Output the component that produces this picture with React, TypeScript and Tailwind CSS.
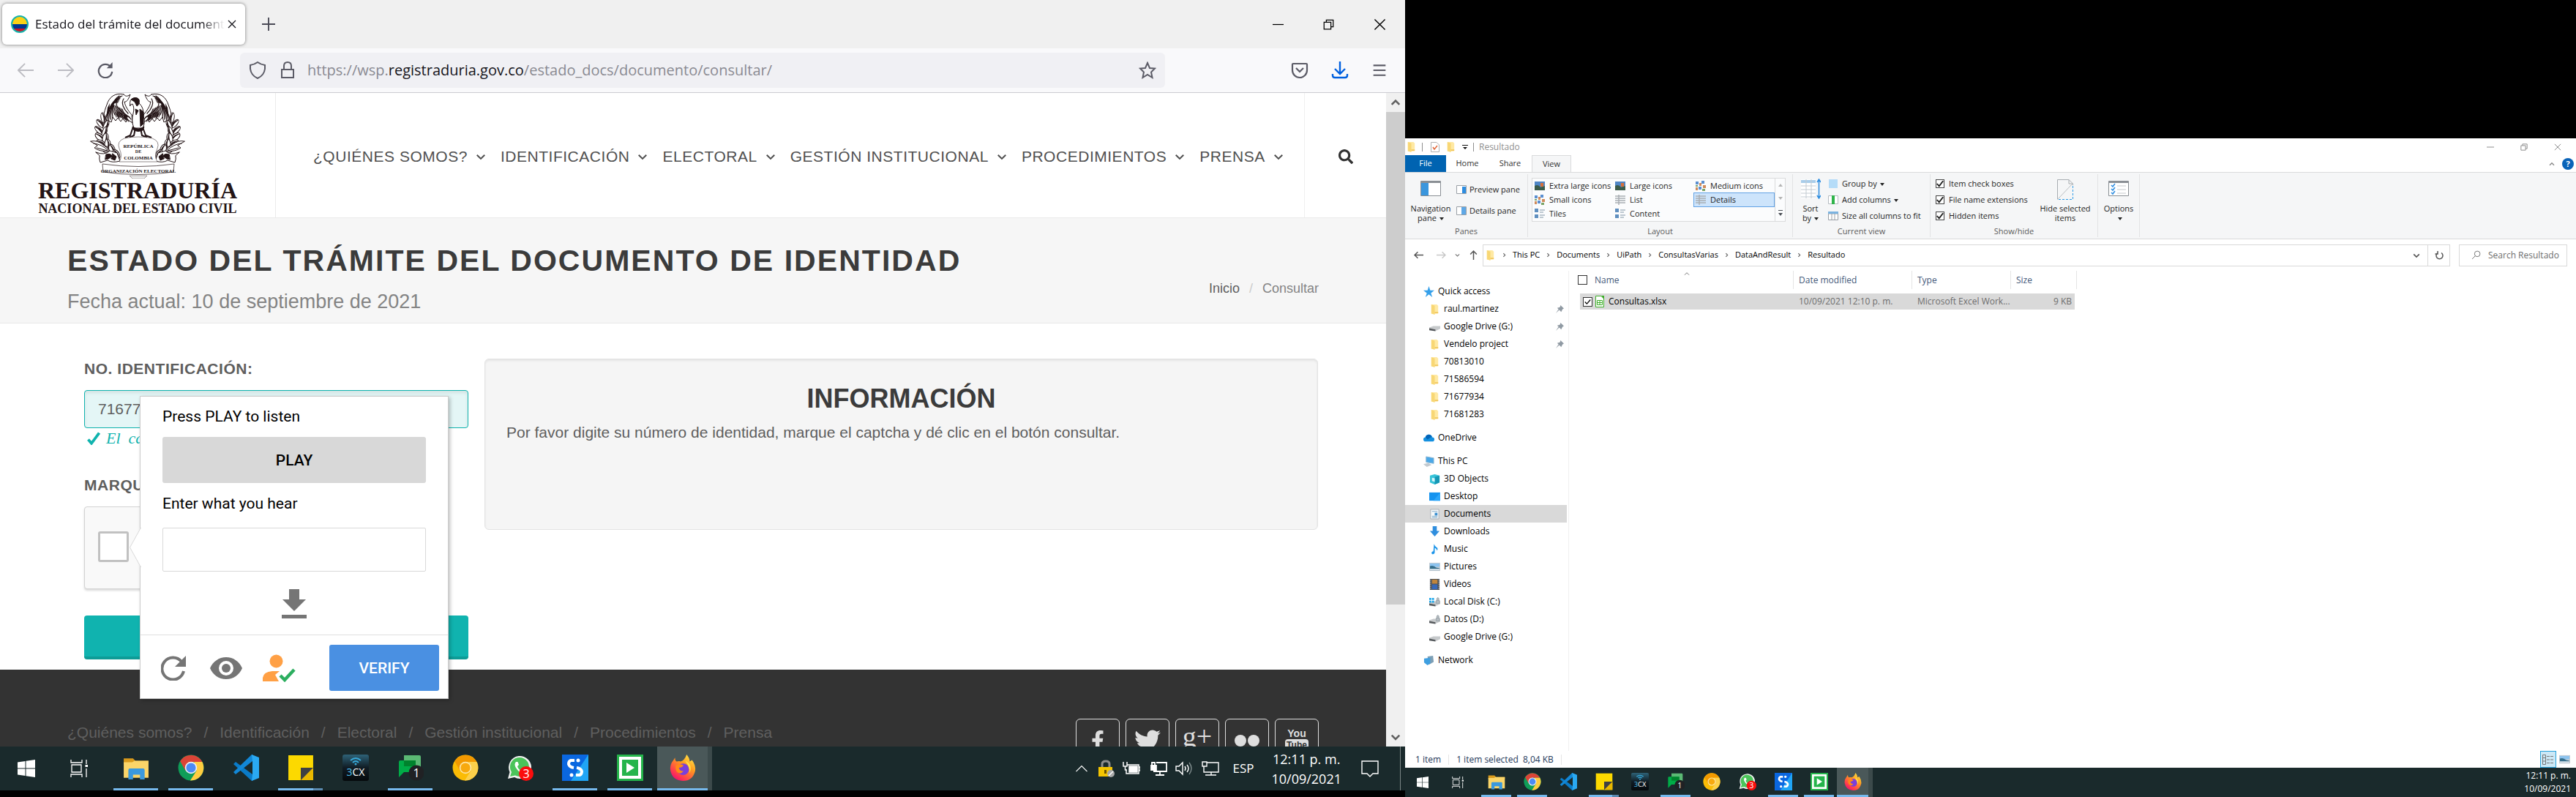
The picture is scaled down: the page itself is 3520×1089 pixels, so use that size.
import type { ReactNode } from "react";
import { FaFacebookF, FaTwitter } from "react-icons/fa";
import { FaSearch } from "react-icons/fa";

/* ------------------------------------------------------------------ */
/* Emblem                                                              */
/* ------------------------------------------------------------------ */

const INK = "#231416";

function EmblemHalf() {
  const longFeathers = [0, 1, 2, 3, 4];
  const shortFeathers = [0, 1, 2, 3, 4, 5, 6];
  const leaves: [number, number, number, number][] = [
    [18, 34, 3, -10],
    [14, 42, 3, -40],
    [22, 44, 3, 25],
    [12, 51, 3, -45],
    [20, 53, 3, 20],
    [13, 60, 4, -50],
    [21, 62, 4, 10],
    [15, 69, 4, -60],
    [24, 70, 4, 0],
    [21, 77, 4, -50],
    [30, 77, 4, -20],
    [28, 86, 4, -60],
    [36, 84, 4, -30],
  ];
  return (
    <g stroke={INK} strokeWidth="1" fill="#fff" strokeLinejoin="round" strokeLinecap="round">
      <path d="M46 2 C34 -1 26 6 23 16 C19 26 17 36 17 46 L21 42 L24 46 L26 38 L29 40 L31 33 L35 38 L38 34 L42 39 L45 35 L49 40 L51 36 L58 41 L57 30 C52 24 48 18 47 12 C50 13 53 8 55 2 C50 6 48 4 46 2Z" />
      {longFeathers.map((i) => (
        <path
          key={i}
          fill="none"
          strokeWidth="1.3"
          d={`M${42 - i} ${5 + i * 2} C${32 - i} ${8 + i} ${26 + i} ${18 + i} ${19 + i * 3} ${42 - i * 2}`}
        />
      ))}
      {shortFeathers.map((i) => (
        <path
          key={i}
          fill="none"
          strokeWidth="1.1"
          d={`M${32 + i * 2} ${16 + i} q2 8 ${4 + i} ${17 - i} M${36 + i * 2} ${24 + i} q3 5 ${5} 9`}
        />
      ))}
      <path fill="none" strokeWidth="1.2" d="M44 4 C36 6 34 14 38 20 C44 28 52 30 56 36 M40 4 C30 10 30 22 34 30 M46 8 C42 14 46 22 52 28" />
      <path fill={INK} stroke="none" d="M24 20 L27 14 L26 26 L22 34Z M35 26 L39 30 L41 36 L37 32Z M46 30 L50 33 L51 38 L46 34Z" />
      {leaves.map(([x, y, r, a]) => (
        <g key={`${x}-${y}`} transform={`translate(${x} ${y}) rotate(${a})`}>
          <ellipse rx={r} ry="7" />
          <path d="M0 -6 Q2 0 0 6 L1.8 3 Q3 -1 0 -6Z" fill={INK} />
        </g>
      ))}
      <path d="M1 66 Q10 64 18 71 Q24 74 27 80 Q12 80 6 75 L10 72Z" />
      <path d="M5 69 Q16 70 24 78 M9 75 Q16 77 24 79" fill="none" />
      <path d="M8 81 Q20 86 27 79 L37 82 L41 93 Q30 96 24 92 L14 95 Q12 90 13 86Z" />
      <path d="M22 84 Q28 82 30 86 Q26 91 21 91Z M31 83 L36 87 L34 92 L29 90Z" fill={INK} />
    </g>
  );
}

function Emblem() {
  return (
    <svg viewBox="0 0 130 117" className="h-[117px] w-[130px]" aria-hidden="true">
      <EmblemHalf />
      <g transform="translate(130 0) scale(-1 1)">
        <EmblemHalf />
      </g>
      <g stroke={INK} strokeWidth="1" strokeLinejoin="round">
        <path d="M55 18 Q53 8 60 7 Q68 5 67 14 Q74 20 73 32 Q76 40 72 48 L60 48 Q56 38 59 28 Q61 20 58 15 L54 17Z" fill="#fff" />
        <path d="M56 9 Q62 4 67 9 Q68 16 64 18 L61 12Z M68 22 L73 26 L73 42 L69 46Z M62 22 L66 24 L63 30Z" fill={INK} />
        <path d="M59 46 L55 58 L48 61 M62 48 L60 58 L54 61 M72 47 L76 58 L84 61 M69 48 L71 58 L78 61" fill="none" strokeWidth="2" />
        <path d="M58 46 Q66 52 74 46 L72 51 Q66 54 60 51Z" fill={INK} />
        <path d="M40 94 Q45 86 40 76 Q36 66 47 62 Q66 58 85 62 Q96 66 92 76 Q87 86 92 94Z" fill="#fff" strokeWidth="0.5" />
        <path d="M17 97 Q66 104 115 97 L114 108 Q66 115 18 108Z" fill="#fff" strokeWidth="0.7" />
        <path d="M54 113 L78 113 L74 117 L58 117Z" fill="#eee" strokeWidth="0.4" />
      </g>
      <g fill={INK} textAnchor="middle" fontFamily="Liberation Serif" fontSize="7">
        <text x="66" y="75">REPÚBLICA</text>
        <text x="66" y="82" fontSize="6">DE</text>
        <text x="66" y="91">COLOMBIA</text>
        <text x="66" y="109" fontSize="7" fontWeight="700">ORGANIZACIÓN ELECTORAL</text>
      </g>
    </svg>
  );
}

/* ------------------------------------------------------------------ */
/* Small line icons                                                    */
/* ------------------------------------------------------------------ */

function Line({
  d,
  box = 24,
  w = 2,
  className,
}: {
  d: string;
  box?: number;
  w?: number;
  className: string;
}) {
  return (
    <svg viewBox={`0 0 ${box} ${box}`} className={className} fill="none" stroke="currentColor" strokeWidth={w} aria-hidden="true">
      <path d={d} />
    </svg>
  );
}

const CHEVRON_DOWN = "M3 8 L12 17 L21 8";
const CHEVRON_UP = "M3 17 L12 8 L21 17";
const CHEVRON_RIGHT = "M8 4 L16 12 L8 20";
const CROSS = "M2 2 L22 22 M22 2 L2 22";
const RESTORE = "M2 7 H17 V22 H2Z M7 7 V2 H22 V17 H17";

/* ------------------------------------------------------------------ */
/* Taskbar                                                             */
/* ------------------------------------------------------------------ */

function WindowsIcon() {
  return (
    <svg viewBox="0 0 24 24" className="h-full" fill="#fff" aria-hidden="true">
      <path d="M0 3.4 L10.5 2 V11.5 H0Z M11.5 1.8 L24 0 V11.5 H11.5Z M0 12.5 H10.5 V22 L0 20.6Z M11.5 12.5 H24 V24 L11.5 22.2Z" />
    </svg>
  );
}

function TaskViewIcon() {
  return (
    <svg viewBox="0 0 24 24" className="h-full" fill="none" stroke="#fff" strokeWidth="1.3" aria-hidden="true">
      <path d="M1 0 V4 H16 V0 M2 7 H15 V17 H2Z M1 24 V20 H16 V24 M22 0 V6 M22 12 V24" />
      <path d="M20.500 7 H24 V10 H20.500Z" fill="#fff" stroke="none" />
    </svg>
  );
}

function ExplorerIcon() {
  return (
    <svg viewBox="0 0 34 34" className="h-full" aria-hidden="true">
      <path d="M1 5 H13 L16 8 H33 V12 H1Z" fill="#d99a1c" />
      <path d="M1 10 L12 10 L15 8 H33 V30 H1Z" fill="#fbd569" />
      <path d="M7 32 V20 Q7 18 9 18 H26 Q28 18 28 20 V32 H22 V26 H13 V32Z" fill="#3a99de" />
    </svg>
  );
}

function ChromeIcon({ gold = false }: { gold?: boolean }) {
  const top = gold ? "#f29900" : "#db4437";
  const left = gold ? "#fbbc05" : "#0f9d58";
  const right = gold ? "#fcd04b" : "#ffcd40";
  return (
    <svg viewBox="0 0 34 34" className="h-full" aria-hidden="true">
      <circle cx="17" cy="17" r="16.500" fill={left} />
      <path d="M3 8.500 A16.500 16.500 0 0 1 31.500 9.500 H17 L10 21Z" fill={top} />
      <path d="M31.500 9.500 A16.500 16.500 0 0 1 16 33.500 L24 21 L21 9.500Z" fill={right} />
      <circle cx="17" cy="17" r="7.800" fill={gold ? "#fde6a5" : "#f1f1f1"} />
      <circle cx="17" cy="17" r="6.200" fill={gold ? "#f7a90f" : "#4c8bf5"} />
    </svg>
  );
}

function CodeIcon() {
  return (
    <svg viewBox="0 0 36 36" className="h-full" aria-hidden="true">
      <path d="M1 13 L4 10 L27 27 V36 L26 36Z" fill="#0a7bc8" />
      <path d="M1 24 L4 27 L27 9 V0 L26 0Z" fill="#1287d6" />
      <path d="M26 0 L36 4 V32 L26 36 L27 27 V9Z" fill="#2aa9f2" />
    </svg>
  );
}

function StickyIcon() {
  return (
    <svg viewBox="0 0 34 34" className="h-full" aria-hidden="true">
      <path d="M1 1 H33 V33 H1Z" fill="#fcd900" />
      <path d="M16 33 L33 33 V17Z" fill="#e9b800" />
      <path d="M17 17 H33 L17 33Z" fill="#3e4043" />
    </svg>
  );
}

function ThreeCxIcon() {
  return (
    <svg viewBox="0 0 36 36" className="h-full" aria-hidden="true">
      <defs>
        <linearGradient id="cx" x1="0" y1="0" x2="0" y2="1">
          <stop offset="0" stopColor="#2e6277" />
          <stop offset="0.500" stopColor="#101c24" />
          <stop offset="1" stopColor="#05090c" />
        </linearGradient>
      </defs>
      <rect width="36" height="36" rx="3" fill="url(#cx)" />
      <path d="M11 8 Q18 2 25 8 M14 11 Q18 7 22 11" stroke="#37a8d8" strokeWidth="2" fill="none" />
      <circle cx="18" cy="13" r="1.500" fill="#37a8d8" />
      <text x="18" y="29" fontSize="14" fontFamily="Open Sans" textAnchor="middle" fill="#fff">
        <tspan fill="#4cc0f0">3</tspan>CX
      </text>
    </svg>
  );
}

function ChatIcon() {
  return (
    <svg viewBox="0 0 36 36" className="h-full" aria-hidden="true">
      <path d="M9 1 H30 Q32 1 32 3 V22 L26 16 H9Z" fill="#5bb974" />
      <path d="M2 10 Q2 8 4 8 H25 V24 H9 L2 31Z" fill="#00ac47" />
      <path d="M9 8 H25 V16 H9Z" fill="#00832d" />
      <circle cx="26" cy="25" r="10.500" fill="#202124" />
      <text x="26" y="31" fontSize="16" fontFamily="Open Sans" textAnchor="middle" fill="#fff">1</text>
    </svg>
  );
}

function WhatsAppTaskIcon() {
  return (
    <svg viewBox="0 0 36 36" className="h-full" aria-hidden="true">
      <path d="M1 33 L3.500 24 A15.500 15.500 0 1 1 10 31Z" fill="#f2f2f2" />
      <path d="M4 30 L6 24 A13 13 0 1 1 11 28.500Z" fill="#4bc45a" />
      <path d="M12 10 Q9 13 12 18 Q16 25 22 26 Q25 25 25 22 L21 20 L19 22 Q15 20 14 16 L16 14 L14.500 10Z" fill="#fff" />
      <circle cx="26" cy="26" r="10" fill="#fb0d0d" />
      <text x="26" y="32" fontSize="16" fontFamily="Open Sans" textAnchor="middle" fill="#fff">3</text>
    </svg>
  );
}

function StudioIcon() {
  return (
    <svg viewBox="0 0 36 36" className="h-full" aria-hidden="true">
      <rect width="36" height="36" fill="#0a67e0" />
      <path d="M36 0 V36 H12Z" fill="#20a5f5" />
      <path d="M17 8 H12 Q9 9 9 13 Q10 17 16 18 M19 28 H24 Q27 27 27 23 Q26 19 20 18" stroke="#fff" strokeWidth="4" fill="none" />
      <circle cx="22" cy="8" r="2.500" fill="#fff" />
      <circle cx="13" cy="28" r="2.500" fill="#fff" />
    </svg>
  );
}

function RobotIcon() {
  return (
    <svg viewBox="0 0 36 36" className="h-full" aria-hidden="true">
      <rect width="36" height="36" fill="#25b44b" />
      <rect x="5" y="5" width="26" height="26" fill="none" stroke="#fff" strokeWidth="4" />
      <path d="M13 11 L24 18 L13 25Z" fill="#fff" />
    </svg>
  );
}

function FirefoxIcon() {
  return (
    <svg viewBox="0 0 34 34" className="h-full" aria-hidden="true">
      <defs>
        <linearGradient id="ff" x1="0.900" y1="0" x2="0.200" y2="1">
          <stop offset="0" stopColor="#fff44f" />
          <stop offset="0.400" stopColor="#ff9a1f" />
          <stop offset="0.800" stopColor="#ff3750" />
          <stop offset="1" stopColor="#eb0878" />
        </linearGradient>
      </defs>
      <path d="M22 0 Q26 5 26 9 L29 7 Q34 14 33 21 Q30 34 17 34 Q3 33 1 20 Q0 13 5 7 L7 4 Q7 8 9 9 Q13 8 14 9 Q19 8 22 0Z" fill="url(#ff)" />
      <circle cx="17.500" cy="19" r="7.500" fill="#7a3fdb" />
      <path d="M8 14 Q14 11 18 14 Q16 17 12 17 Q13 22 18 21 Q14 27 9 22 Q7 18 8 14Z" fill="#ff8a16" />
      <path d="M20 8 Q30 12 26 24 Q26 15 20 8Z" fill="#ffe14a" />
    </svg>
  );
}

type TaskState = "idle" | "open" | "stacked" | "active";
const TASKS: { label: string; icon: ReactNode; state: TaskState }[] = [
  { label: "File Explorer", icon: <ExplorerIcon />, state: "open" },
  { label: "Google Chrome", icon: <ChromeIcon />, state: "open" },
  { label: "Visual Studio Code", icon: <CodeIcon />, state: "idle" },
  { label: "Sticky Notes", icon: <StickyIcon />, state: "stacked" },
  { label: "3CX", icon: <ThreeCxIcon />, state: "idle" },
  { label: "Google Chat", icon: <ChatIcon />, state: "open" },
  { label: "Chrome Canary", icon: <ChromeIcon gold />, state: "idle" },
  { label: "WhatsApp", icon: <WhatsAppTaskIcon />, state: "idle" },
  { label: "UiPath Studio", icon: <StudioIcon />, state: "open" },
  { label: "UiPath Robot", icon: <RobotIcon />, state: "open" },
  { label: "Firefox", icon: <FirefoxIcon />, state: "active" },
];

function TaskButtons({ small = false }: { small?: boolean }) {
  const slot = small ? "w-[49px]" : "w-[75px]";
  const glyph = small ? "h-6" : "h-9";
  const plain = small ? "w-12" : "w-[72px]";
  const plainGlyph = small ? "h-4" : "h-6";
  const bar = small ? "mx-1 h-[3px]" : "mx-[7px] h-[3px]";
  return (
    <div className="flex">
      <button aria-label="Start" className={`flex items-center justify-center ${plain}`}>
        <span className={plainGlyph}><WindowsIcon /></span>
      </button>
      <button aria-label="Task View" className={`mr-1 flex items-center justify-center ${plain}`}>
        <span className={plainGlyph}><TaskViewIcon /></span>
      </button>
      {TASKS.map((t) => (
        <button
          key={t.label}
          aria-label={t.label}
          className={`flex flex-col ${slot} ${t.state === "active" ? "border-r-[6px] border-[#3c4a4b] bg-[#4a5859]" : ""}`}
        >
          <span className="flex w-full flex-1 items-center justify-center">
            <span className={glyph}>{t.icon}</span>
          </span>
          <span className={t.state === "active" ? "flex h-[3px] w-full bg-[#76b9ed]" : `flex self-stretch ${bar} ${t.state === "idle" ? "" : "bg-[#76b9ed]"}`}>
            {t.state === "stacked" && <span className="ml-auto h-full w-[22%] bg-[#5b8ab0]" />}
          </span>
        </button>
      ))}
    </div>
  );
}

function Tray() {
  return (
    <div className="flex items-center font-['Open_Sans'] text-white">
      <Line d={CHEVRON_UP} className="mr-3 h-5 w-5" w={1.5} />
      <svg viewBox="0 0 24 24" className="mr-2.5 h-6 w-6" aria-hidden="true">
        <path d="M6 11 V6 Q6 2 11 2 Q16 2 16 6 V11" fill="none" stroke="#8d8d8d" strokeWidth="3" />
        <path d="M1 10 H20 V23 H1Z" fill="#f4c400" />
        <path d="M9 14 H12 V19 H9Z" fill="#6b5200" />
        <circle cx="18" cy="19" r="5" fill="#a9a9a9" />
        <path d="M15 22 L21 16" stroke="#fff" strokeWidth="1.500" />
      </svg>
      <svg viewBox="0 0 24 24" className="mr-3.5 h-6 w-6" fill="none" stroke="#fff" strokeWidth="1.500" aria-hidden="true">
        <path d="M6 7 H22 V19 H5 V14 M22 10 H24 V15 H22 M1 3 V9 H6 V3 M3.500 9 V14 H6" />
        <path d="M9 9 H20 V17 H9Z" fill="#fff" />
      </svg>
      <svg viewBox="0 0 24 24" className="mr-2.5 h-6 w-6" fill="none" stroke="#fff" strokeWidth="1.800" aria-hidden="true">
        <path d="M8 4 H22 V16 H4 M13 16 V21 M7 21 H19" />
        <path d="M1 8 H8 V14 H1Z" fill="#fff" />
        <path d="M2 8 V4 H6 V8" />
      </svg>
      <svg viewBox="0 0 24 24" className="mr-3 h-6 w-6" fill="none" stroke="#fff" strokeWidth="1.400" aria-hidden="true">
        <path d="M1 9 H5 L10 4 V20 L5 15 H1Z M13 9 Q15 12 13 15 M16 7 Q20 12 16 17" />
        <path d="M19 4 Q25 12 19 20" stroke="#7e8b8c" />
      </svg>
      <svg viewBox="0 0 24 24" className="mr-[18px] h-6 w-6" fill="none" stroke="#fff" strokeWidth="1.400" aria-hidden="true">
        <path d="M7 4 H23 V17 H3 V9 M13 17 V21 M5 21 H20 M1 3 H7 V9 H1Z" />
      </svg>
      <span className="mr-6 text-[17px]">ESP</span>
      <div className="mr-[27px] pt-0.5 text-center text-lg leading-[27px]">
        <div>12:11 p. m.</div>
        <div>10/09/2021</div>
      </div>
      <Line d="M1 2 H23 V19 H16 L12 23 L8 19 H1Z" className="mr-[29px] h-6 w-6" w={1.4} />
      <span className="mr-1.5 h-[60px] w-px bg-[#7b8686]" />
    </div>
  );
}

/* ------------------------------------------------------------------ */
/* Browser                                                             */
/* ------------------------------------------------------------------ */

function TabStrip() {
  return (
    <div className="flex h-[66px] items-center bg-[#f0f0f0] font-['Open_Sans'] text-[#15141a]">
      <div className="ml-[3px] flex h-14 w-[332px] items-center rounded-md bg-white px-3 shadow-[0_0_4px_rgba(0,0,0,0.5)]">
        <svg viewBox="0 0 24 24" className="h-6 w-6 shrink-0" aria-hidden="true">
          <clipPath id="flag"><circle cx="12" cy="12" r="11" /></clipPath>
          <g clipPath="url(#flag)">
            <path d="M0 0 H24 V12 H0Z" fill="#fcd116" />
            <path d="M0 12 H24 V18 H0Z" fill="#003893" />
            <path d="M0 18 H24 V24 H0Z" fill="#ce1126" />
          </g>
          <circle cx="12" cy="12" r="11" fill="none" stroke="#16b3ac" strokeWidth="2" />
        </svg>
        <span className="ml-[9px] flex-1 overflow-hidden text-[17px] whitespace-nowrap [mask-image:linear-gradient(to_right,black_88%,transparent)]">
          Estado del trámite del documento
        </span>
        <button aria-label="Close tab" className="ml-1"><Line d={CROSS} className="h-3 w-3" w={2.5} /></button>
      </div>
      <button aria-label="New tab" className="ml-[23px] text-[#4a4a55]">
        <Line d="M12 0 V24 M0 12 H24" className="h-[18px] w-[18px]" w={2.5} />
      </button>
      <div className="ml-auto flex items-center gap-[54px] pr-[26px] text-black">
        <button aria-label="Minimize"><Line d="M0 12 H24" className="h-[15px] w-[15px]" /></button>
        <button aria-label="Restore"><Line d={RESTORE} className="h-[15px] w-[15px]" /></button>
        <button aria-label="Close"><Line d={CROSS} className="h-[17px] w-[17px]" /></button>
      </div>
    </div>
  );
}

function Toolbar() {
  return (
    <div className="flex h-[61px] items-center border-b border-[#ccccd1] bg-[#f9f9fb] text-[#5b5b66]">
      <button aria-label="Back" className="ml-6 text-[#bcbcc2]">
        <Line d="M24 12 H1 M11 2 L1 12 L11 22" className="h-[22px] w-[22px]" />
      </button>
      <button aria-label="Forward" className="ml-[33px] text-[#bcbcc2]">
        <Line d="M0 12 H23 M13 2 L23 12 L13 22" className="h-[22px] w-[22px]" />
      </button>
      <button aria-label="Reload" className="ml-8">
        <svg viewBox="0 0 24 24" className="h-[22px] w-[22px]" fill="none" stroke="currentColor" strokeWidth="2.500" aria-hidden="true">
          <path d="M20 7 A10 10 0 1 0 22 14" />
          <path d="M22.500 0 V9 H14Z" fill="currentColor" stroke="none" />
        </svg>
      </button>
      <div className="mr-[172px] ml-[173px] flex h-12 flex-1 items-center rounded-md bg-[#f0f0f4] px-3">
        <Line d="M12 1 Q16 4 22 5 V10 Q21 19 12 23 Q3 19 2 10 V5 Q8 4 12 1Z" className="h-6 w-6" />
        <Line d="M4 11 H20 V22 H4Z M7 11 V6 Q7 1 12 1 Q17 1 17 6 V11" className="ml-[17px] h-6 w-6" />
        <p className="ml-[15px] flex-1 font-['Open_Sans'] text-xl text-[#8a8a92]">
          https://wsp.<span className="text-[#15141a]">registraduria.gov.co</span>/estado_docs/documento/consultar/
        </p>
        <button aria-label="Bookmark">
          <Line d="M12 2 L15 9 L22 9.500 L17 14.500 L18.500 22 L12 18 L5.500 22 L7 14.500 L2 9.500 L9 9Z" className="h-6 w-6" />
        </button>
      </div>
      <div className="flex items-center gap-[31px] pr-6">
        <button aria-label="Pocket"><Line d="M2 4 Q2 3 3 3 H21 Q22 3 22 4 V12 A10 10 0 0 1 2 12Z M7 9 L12 14 L17 9" className="h-6 w-6" w={2.2} /></button>
        <button aria-label="Downloads" className="text-[#0060df]"><Line d="M12 0 V16 M5 10 L12 17 L19 10 M2 17 V19 Q2 22 5 22 H19 Q22 22 22 19 V17" className="h-6 w-6" w={2.4} /></button>
        <button aria-label="Menu"><Line d="M2 4 H22 M2 12 H22 M2 20 H22" className="h-[20px] w-[22px]" w={2.5} /></button>
      </div>
    </div>
  );
}

const NAV = ["¿QUIÉNES SOMOS?", "IDENTIFICACIÓN", "ELECTORAL", "GESTIÓN INSTITUCIONAL", "PROCEDIMIENTOS", "PRENSA"];
const FOOTER = ["¿Quiénes somos?", "Identificación", "Electoral", "Gestión institucional", "Procedimientos", "Prensa"];

function SiteHeader() {
  return (
    <header className="flex h-[171px] border-b border-[#ebebeb] bg-white">
      <div className="flex w-[377px] shrink-0 flex-col items-center border-r border-[#ebebeb] font-['Liberation_Serif'] font-bold text-[#231416]">
        <Emblem />
        <div className="text-[32px] leading-8">REGISTRADURÍA</div>
        <div className="text-lg leading-[18px]">NACIONAL DEL ESTADO CIVIL</div>
      </div>
      <nav className="flex flex-1 items-center gap-5 border-r border-[#f0f0f0] pt-1 pl-[51px]">
        {NAV.map((n) => (
          <a key={n} href="#" className="flex items-center gap-[11px] text-[21px] tracking-wide whitespace-nowrap text-[#505050]">
            {n}
            <Line d={CHEVRON_DOWN} className="h-3.5 w-3.5" w={3.5} />
          </a>
        ))}
      </nav>
      <div className="flex w-[111px] items-center justify-center pt-1">
        <button aria-label="Buscar" className="text-[#303030]"><FaSearch className="h-5 w-5" /></button>
      </div>
    </header>
  );
}

function CaptchaPopup() {
  return (
    <div className="absolute top-[-152px] left-[75px] z-10 w-[422px] border border-[#cccccc] bg-white font-[Roboto] text-[21px] leading-6 text-black shadow-[2px_2px_5px_rgba(0,0,0,0.25)]">
      <svg viewBox="0 0 16 56" className="absolute top-[178px] -left-[15px] h-14 w-4" aria-hidden="true">
        <path d="M16 0 L0 28 L16 56Z" fill="#fff" />
        <path d="M15.500 1 L0.500 28 L15.500 55" fill="none" stroke="#d8d8d8" />
      </svg>
      <div className="flex flex-col px-[30px] pt-[15px]">
        <p>Press PLAY to listen</p>
        <button className="mt-4 h-[63px] rounded-[3px] bg-[#d8d8d8] font-medium">PLAY</button>
        <label htmlFor="heard" className="mt-4">Enter what you hear</label>
        <input id="heard" className="mt-[21px] h-[60px] rounded-[2px] border border-[#d9d9d9] px-3 outline-none" />
        <button aria-label="Download audio" className="mt-6 self-center text-[#757575]">
          <svg viewBox="0 0 34 40" className="h-10 w-[34px]" fill="currentColor" aria-hidden="true">
            <path d="M10 0 H24 V14 H33 L17 30 L1 14 H10Z M0 35 H34 V40 H0Z" />
          </svg>
        </button>
      </div>
      <div className="mt-[22px] flex items-center border-t border-[#dfdfdf] px-3 pt-[13px] pb-[10px] text-[#757575]">
        <button aria-label="New challenge" className="ml-4">
          <svg viewBox="0 0 34 34" className="h-[34px] w-[34px]" fill="none" stroke="currentColor" strokeWidth="4" aria-hidden="true">
            <path d="M28 8 A15 15 0 1 0 31 21" />
            <path d="M34 0 V15 H19Z" fill="currentColor" stroke="none" />
          </svg>
        </button>
        <button aria-label="Visual challenge" className="ml-[33px]">
          <svg viewBox="0 0 44 30" className="h-[30px] w-11" fill="currentColor" aria-hidden="true">
            <path fillRule="evenodd" d="M22 0 C12 0 4 6 0 15 C4 24 12 30 22 30 C32 30 40 24 44 15 C40 6 32 0 22 0Z M22 25 A10 10 0 1 1 22 5 A10 10 0 0 1 22 25Z" />
            <circle cx="22" cy="15" r="6" />
          </svg>
        </button>
        <button aria-label="Solve" className="ml-7">
          <svg viewBox="0 0 45 38" className="h-[38px] w-[45px]" aria-hidden="true">
            <circle cx="18.500" cy="9.500" r="9" fill="#ffa045" />
            <path d="M0 37 V32 Q1 24 13 23 H23 L17 28 L22 37Z" fill="#ffa045" />
            <path d="M24 29 L30 35 L43 21" fill="none" stroke="#2cae5f" strokeWidth="4.500" />
          </svg>
        </button>
        <button className="ml-auto h-[63px] w-[150px] rounded-[3px] bg-[#4a90e2] font-medium text-white">VERIFY</button>
      </div>
    </div>
  );
}

function SocialBox({ label, children }: { label: string; children: ReactNode }) {
  return (
    <a href="#" aria-label={label} className="flex h-[60px] w-[60px] items-center justify-center rounded-md border border-[#dedede] text-[#dedede]">
      {children}
    </a>
  );
}

function SitePage() {
  return (
    <div className="flex-1 overflow-hidden bg-white font-['Liberation_Sans'] text-[#5e5e5e]">
      <SiteHeader />
      <section className="flex items-end justify-between border-b border-[#e8e8e8] bg-[#f6f6f6] px-[92px] pt-[34px] pb-[13px]">
        <div>
          <h1 className="text-[41px] leading-[48px] font-bold tracking-wider text-[#3b3b3b]">
            ESTADO DEL TRÁMITE DEL DOCUMENTO DE IDENTIDAD
          </h1>
          <p className="mt-4 text-[27px] leading-8 text-[#848484]">Fecha actual: 10 de septiembre de 2021</p>
        </div>
        <nav className="flex gap-[13px] pb-[22px] text-lg leading-6">
          <a href="#">Inicio</a>
          <span className="text-[#cccccc]">/</span>
          <span className="text-[#848484]">Consultar</span>
        </nav>
      </section>

      <main className="flex gap-[22px] pt-12 pr-[93px] pb-[14px] pl-[115px]">
        <form className="flex w-[525px] shrink-0 flex-col text-[21px] leading-7" onSubmit={(e) => e.preventDefault()}>
          <label htmlFor="doc" className="font-bold tracking-wide">NO. IDENTIFICACIÓN:</label>
          <input
            id="doc"
            defaultValue="71677"
            className="mt-[15px] h-[52px] rounded-[4px] border border-[#0fb3ae] bg-[#e4f6f6] px-[18px] shadow-[inset_0_3px_4px_rgba(0,0,0,0.08)] outline-none"
          />
          <p className="flex items-center gap-2 pl-1 font-['Liberation_Serif'] text-[22px] text-[#0fb3ae] italic">
            <Line d="M2 14 L8 21 L22 2" className="h-[18px] w-[18px]" w={5} />
            El&nbsp; campo es válido
          </p>
          <label htmlFor="robot" className="mt-9 font-bold tracking-wide">MARQUE EL CAPTCHA:</label>
          <div className="relative mt-[15px] flex h-[113px] w-[480px] items-center rounded-[4px] border border-[#d3d3d3] bg-[#f9f9f9] pl-[18px] shadow-[0_2px_3px_rgba(0,0,0,0.15)]">
            <input id="robot" type="checkbox" className="mb-1 h-[42px] w-[42px] appearance-none rounded-[3px] border-[3px] border-[#c1c1c1] bg-white" />
            <CaptchaPopup />
          </div>
          <button aria-label="Consultar" className="mt-9 h-[60px] rounded-[4px] border-b-4 border-[#0e9c97] bg-[#10b3af]" />
        </form>
        <section className="min-h-[234px] flex-1 self-start rounded-md border border-[#e3e3e3] bg-[#f5f5f5] px-[29px] pt-[30px] shadow-[inset_0_2px_3px_rgba(0,0,0,0.07)]">
          <h2 className="text-center text-[36px] leading-[48px] font-bold text-[#3b3b3b]">INFORMACIÓN</h2>
          <p className="mt-2 text-[21px] leading-7">
            Por favor digite su número de identidad, marque el captcha y dé clic en el botón consultar.
          </p>
        </section>
      </main>

      <footer className="flex h-52 items-start justify-between bg-[#333333] pt-[67px] pr-[92px] pl-[92px]">
        <nav className="flex gap-4 pt-[5px] text-[21px] leading-7 text-[#5f5f5f]">
          {FOOTER.map((f, i) => (
            <span key={f} className="flex gap-4">
              {i > 0 && <span>/</span>}
              <a href="#">{f}</a>
            </span>
          ))}
        </nav>
        <div className="flex gap-2">
          <SocialBox label="Facebook"><FaFacebookF className="h-7 w-7" /></SocialBox>
          <SocialBox label="Twitter"><FaTwitter className="h-9 w-9" /></SocialBox>
          <SocialBox label="Google+"><span className="pb-3 font-['Liberation_Serif'] text-[38px] leading-8">g+</span></SocialBox>
          <SocialBox label="Flickr">
            <svg viewBox="0 0 34 16" className="h-4 w-[34px]" fill="currentColor" aria-hidden="true">
              <circle cx="8" cy="8" r="8" /><circle cx="26" cy="8" r="8" />
            </svg>
          </SocialBox>
          <SocialBox label="YouTube">
            <span className="flex flex-col items-center pb-1 text-sm leading-4 font-bold">
              You
              <span className="rounded bg-[#dedede] px-0.5 text-xs leading-4 text-[#333333]">Tube</span>
            </span>
          </SocialBox>
        </div>
      </footer>
    </div>
  );
}

function Scrollbar() {
  return (
    <div className="flex w-[26px] flex-col items-center bg-[#f0f0f0] text-[#606060]">
      <div className="flex h-[26px] items-center"><Line d={CHEVRON_UP} className="h-[14px] w-[14px]" w={4.5} /></div>
      <div className="w-full flex-1"><div className="h-[80%] bg-[#cdcdcd]" /></div>
      <div className="flex h-[26px] items-center"><Line d={CHEVRON_DOWN} className="h-[14px] w-[14px]" w={4.5} /></div>
    </div>
  );
}

/* ------------------------------------------------------------------ */
/* File explorer                                                       */
/* ------------------------------------------------------------------ */

function Folder() {
  return (
    <svg viewBox="0 0 16 16" className="h-[15px] w-[15px] shrink-0" aria-hidden="true">
      <path d="M3 1 H11 L13 3 V14 L3 15Z" fill="#ffe9a3" />
      <path d="M3 1 L8 3 V16 L3 14Z" fill="#f8d775" />
      <path d="M8 12 H13 V14 H8Z" fill="#f1c75b" />
    </svg>
  );
}

function Drive({ kind = "plain" }: { kind?: "plain" | "system" | "data" }) {
  return (
    <svg viewBox="0 0 16 16" className="h-[15px] w-[15px] shrink-0" aria-hidden="true">
      <path d="M0 9 L6 7 H16 V11 L9 14 L0 12Z" fill="#c6c9cb" />
      <path d="M0 10 L9 12 V14.500 L0 13Z" fill="#55595c" />
      {kind !== "plain" && <path d="M10 6 H15 V10 H10Z M11 6 V3 Q12.500 0 14 3 V6" fill="#b6bdc2" stroke="#9aa3a9" />}
      {kind === "system" && <path d="M0 2 H3 V5 H0Z M4 2 H7 V5 H4Z M0 6 H3 V9 H0Z M4 6 H7 V9 H4Z" fill="#21a8ea" />}
    </svg>
  );
}

function Glyph({ children }: { children: ReactNode }) {
  return <svg viewBox="0 0 16 16" className="h-[15px] w-[15px] shrink-0" aria-hidden="true">{children}</svg>;
}

function Picture() {
  return (
    <Glyph>
      <path d="M0 2 H16 V14 H0Z" fill="#c9ced3" />
      <path d="M1 3 H15 V8 H1Z" fill="#8cc3ef" />
      <path d="M1 7 Q6 5 10 9 L15 10 V13 H1Z" fill="#356e8b" />
      <path d="M1 11 H15 V13 H1Z" fill="#e6eef4" />
    </Glyph>
  );
}

type Place = { name: string; icon: ReactNode; root?: boolean; pinned?: boolean; selected?: boolean };
const PLACES: Place[] = [
  { name: "Quick access", root: true, icon: <Glyph><path d="M8 0 L10 6 L16 6 L11 10 L13 16 L8 12 L3 16 L5 10 L0 6 L6 6Z" fill="#35a0ea" /></Glyph> },
  { name: "raul.martinez", icon: <Folder />, pinned: true },
  { name: "Google Drive (G:)", icon: <Drive />, pinned: true },
  { name: "Vendelo project", icon: <Folder />, pinned: true },
  { name: "70813010", icon: <Folder /> },
  { name: "71586594", icon: <Folder /> },
  { name: "71677934", icon: <Folder /> },
  { name: "71681283", icon: <Folder /> },
  { name: "OneDrive", root: true, icon: <Glyph><path d="M3 13 Q0 13 0 10 Q0 7 3 7 Q4 3 8 3 Q12 3 13 7 Q16 7 16 10 Q16 13 13 13Z" fill="#1490df" /><path d="M3 7 Q4 3 8 3 Q11 3 12 6 L6 10Z" fill="#0364b8" /></Glyph> },
  { name: "This PC", root: true, icon: <Glyph><path d="M4 1 L15 3 V11 L4 9Z" fill="#4aa8e8" stroke="#8bb5d1" /><path d="M0 12 L7 10 L12 13 L5 16Z" fill="#c3cad0" /></Glyph> },
  { name: "3D Objects", icon: <Glyph><path d="M1 3 L8 1 L15 3 V13 L8 16 L1 13Z" fill="#36c3d8" /><path d="M8 5 L15 3 V13 L8 16Z" fill="#1497b5" /><path d="M4 6 L8 7 V12 L4 11Z" fill="#d5f5fa" /></Glyph> },
  { name: "Desktop", icon: <Glyph><path d="M0 2 H16 V14 H0Z" fill="#1593ef" /><path d="M16 2 V14 H6Z" fill="#2ba6fa" /></Glyph> },
  { name: "Documents", selected: true, icon: <Glyph><path d="M2 1 H14 V15 H2Z" fill="#f7f9fa" stroke="#a6adb3" /><path d="M4 4 H12 M4 11 H12 M4 13 H12" stroke="#7aa7c8" /><path d="M8 6 H12 V10 H8Z" fill="#3b8fd0" /></Glyph> },
  { name: "Downloads", icon: <Glyph><path d="M5 0 H11 V7 H15 L8 15 L1 7 H5Z" fill="#2f8ede" /></Glyph> },
  { name: "Music", icon: <Glyph><path d="M7 0 Q8 4 12 6 Q13 8 11 10 Q11 7 8 6 V13 Q7 16 4 15 Q2 12 6 11Z" fill="#1c95ea" /></Glyph> },
  { name: "Pictures", icon: <Picture /> },
  { name: "Videos", icon: <Glyph><path d="M1 0 H15 V16 H1Z" fill="#4a4f55" /><path d="M4 1 H12 V7 H4Z" fill="#c0853c" /><path d="M4 8 H12 V15 H4Z" fill="#3768b8" /><path d="M2 1 V16 M14 1 V16" stroke="#c9cdd1" strokeDasharray="1.500 1.500" /></Glyph> },
  { name: "Local Disk (C:)", icon: <Drive kind="system" /> },
  { name: "Datos (D:)", icon: <Drive kind="data" /> },
  { name: "Google Drive (G:)", icon: <Drive /> },
  { name: "Network", root: true, icon: <Glyph><path d="M6 2 L14 1 L15 10 L8 14Z" fill="#7d9fb5" /><path d="M1 5 L10 4 V12 L6 15 L1 11Z" fill="#3f9fe0" /></Glyph> },
];

function PlacesList() {
  return (
    <ul className="w-[224px] shrink-0 border-r border-[#f0f0f0] pt-4 pr-0.5">
      {PLACES.map((p, i) => (
        <li key={i} className={p.root && i > 0 ? "pt-2" : ""}>
          <a
            href="#"
            className={`flex h-6 items-center gap-[5px] pr-1 ${p.root ? "pl-[25px]" : "pl-[33px]"} ${p.selected ? "bg-[#d9d9d9]" : ""}`}
          >
            {p.icon}
            <span>{p.name}</span>
            {p.pinned && (
              <svg viewBox="0 0 12 12" className="ml-auto h-[11px] w-[11px]" aria-hidden="true">
                <path d="M7 0 L12 5 L10 6 L8 10 L5 7 L0 12 L4 6 L2 4 L6 3Z" fill="#909aa3" />
              </svg>
            )}
          </a>
        </li>
      ))}
    </ul>
  );
}

function PaneGlyph({ side }: { side: "left" | "right" }) {
  return (
    <svg viewBox="0 0 14 12" className="h-3 w-3.5" aria-hidden="true">
      <path d="M0.500 0.500 H13.500 V11.500 H0.500Z" fill="#fff" stroke="#9aa0a6" />
      {side === "left" ? <path d="M8 2 H13 V11 H8Z" fill="#2e8de0" /> : <path d="M7 1 H13 V11 H7Z" fill="#5fa8e6" />}
    </svg>
  );
}

function ListGlyph({ kind }: { kind: "photo" | "grid" | "rows" | "mixed" }) {
  return (
    <svg viewBox="0 0 14 14" className="h-3.5 w-3.5 shrink-0" aria-hidden="true">
      {kind === "photo" && (
        <>
          <path d="M0 1 H14 V13 H0Z" fill="#4f86c6" />
          <path d="M0 7 Q5 4 8 9 L14 7 V13 H0Z" fill="#3a5b4a" />
          <path d="M8 3 H12 V8 H8Z" fill="#d6703a" />
        </>
      )}
      {kind === "grid" && (
        <>
          <path d="M0 1 H4 V5 H0Z M8 0 H12 V4 H8Z M4 8 H8 V12 H4Z" fill="#5b8fd0" />
          <path d="M5 3 H8 V7 H5Z M10 6 H14 V10 H10Z M0 9 H3 V13 H0Z" fill="#d08b5b" />
          <path d="M9 11 H13 V14 H9Z M0 6 H3 V8 H0Z" fill="#7aa56a" />
        </>
      )}
      {kind === "rows" && <path d="M0 2 H14 M0 5 H14 M0 8 H14 M0 11 H14 M5 0 V14" stroke="#a9aeb4" strokeWidth="1.500" />}
      {kind === "mixed" && (
        <>
          <path d="M0 0 H5 V5 H0Z M0 8 H5 V13 H0Z" fill="#5f8fbf" />
          <path d="M7 2 H14 M7 5 H12 M7 9 H14 M7 12 H12" stroke="#a9b6c2" strokeWidth="1.500" />
        </>
      )}
    </svg>
  );
}

const LAYOUTS: [string, "photo" | "grid" | "rows" | "mixed"][] = [
  ["Extra large icons", "photo"],
  ["Large icons", "photo"],
  ["Medium icons", "grid"],
  ["Small icons", "grid"],
  ["List", "rows"],
  ["Details", "rows"],
  ["Tiles", "mixed"],
  ["Content", "mixed"],
];

function Caret() {
  return <svg viewBox="0 0 6 4" className="ml-1 inline-block h-1 w-1.5" fill="#222" aria-hidden="true"><path d="M0 0 H6 L3 4Z" /></svg>;
}

function Group({ label, className, children }: { label: string; className: string; children: ReactNode }) {
  return (
    <div className={`my-0.5 flex flex-col border-r border-[#e2e3e4] ${className}`}>
      <div className="flex h-[71px]">{children}</div>
      <div className="text-center leading-4 text-[#5a5a5a]">{label}</div>
    </div>
  );
}

function Ribbon() {
  return (
    <div className="flex h-[92px] border-y border-[#dadbdc] bg-[#f5f6f7] text-[11px] leading-3 text-[#1e1e1e]">
      <Group label="Panes" className="w-[168px]">
        <button className="flex w-[70px] flex-col items-center pt-[9px]">
          <svg viewBox="0 0 28 21" className="h-[21px] w-7" aria-hidden="true">
            <path d="M0.500 0.500 H27.500 V20.500 H0.500Z" fill="#fff" stroke="#8a8f94" />
            <path d="M1 1 H27 V3 H1Z" fill="#8a8f94" />
            <path d="M1 3 H11 V20 H1Z" fill="#3a96dd" />
          </svg>
          <span className="mt-2.5 leading-[13px]">Navigation<br />pane<Caret /></span>
        </button>
        <div className="flex flex-col gap-[17px] pt-[15px]">
          <button className="flex items-center gap-1"><PaneGlyph side="left" />Preview pane</button>
          <button className="flex items-center gap-1"><PaneGlyph side="right" />Details pane</button>
        </div>
      </Group>
      <Group label="Layout" className="w-[362px]">
        <div className="mt-[5px] ml-[5px] flex h-[60px] w-[347px] border border-[#dadbdc] bg-[#fbfcfd]">
          <div className="grid flex-1 grid-cols-[110px_110px_111px] grid-rows-3">
            {LAYOUTS.map(([name, kind]) => (
              <button
                key={name}
                className={`flex items-center gap-1.5 whitespace-nowrap ${name === "Details" ? "border border-[#62a2e4] bg-[#cde4fb] px-0.5" : "px-[3px]"}`}
              >
                <ListGlyph kind={kind} />
                {name}
              </button>
            ))}
          </div>
          <div className="flex w-[14px] flex-col items-center justify-around border-l border-[#dadbdc] text-[#a0a0a0]">
            <svg viewBox="0 0 6 4" className="h-1 w-1.5" fill="#b5b5b5" aria-hidden="true"><path d="M0 4 H6 L3 0Z" /></svg>
            <svg viewBox="0 0 6 4" className="h-1 w-1.5" fill="#b5b5b5" aria-hidden="true"><path d="M0 0 H6 L3 4Z" /></svg>
            <svg viewBox="0 0 6 8" className="h-2 w-1.5" fill="#4a4f55" aria-hidden="true"><path d="M0 0 H6 V1 H0Z M0 4 H6 L3 8Z" /></svg>
          </div>
        </div>
      </Group>
      <Group label="Current view" className="w-[188px]">
        <button className="flex w-[48px] flex-col items-center pt-1.5">
          <svg viewBox="0 0 28 28" className="h-7 w-7" aria-hidden="true">
            <path d="M1 1 H21 V27 H1Z" fill="#fff" />
            <path d="M1 2 H21 V6 H1Z" fill="#a9cdea" />
            <path d="M1 10 H21 M1 15 H21 M1 20 H21 M1 25 H21 M8 1 V27 M15 1 V27" stroke="#c3cbd2" />
            <path d="M25.500 2 V26 M23 5 L25.500 1 L28 5 M23 23 L25.500 27 L28 23" stroke="#2e8de0" strokeWidth="1.500" fill="none" />
          </svg>
          <span className="mt-1.5 leading-[13px]">Sort<br />by<Caret /></span>
        </button>
        <div className="flex flex-col items-start gap-2.5 pt-[7px] whitespace-nowrap">
          <button className="flex items-center gap-[5px]">
            <svg viewBox="0 0 14 12" className="h-3 w-3.5" aria-hidden="true"><path d="M1 0 H13 V12 H1Z" fill="#b5dcf8" /></svg>
            <span>Group by<Caret /></span>
          </button>
          <button className="flex items-center gap-[5px]">
            <svg viewBox="0 0 14 12" className="h-3 w-3.5" aria-hidden="true"><path d="M0.500 0.500 H13.500 V11.500 H0.500Z" fill="#fff" stroke="#b4bac0" /><path d="M5 0 H9 V12 H5Z" fill="#2fb34a" /></svg>
            <span>Add columns<Caret /></span>
          </button>
          <button className="flex items-center gap-[5px]">
            <svg viewBox="0 0 14 12" className="h-3 w-3.5" aria-hidden="true"><path d="M0.500 3 H13.500 V11.500 H0.500Z M5 3 V12 M9 3 V12" fill="#fff" stroke="#9aa0a6" /><path d="M0 0 H14 V3 H0Z" fill="#7bb3e0" /></svg>
            <span>Size all columns to fit</span>
          </button>
        </div>
      </Group>
      <Group label="Show/hide" className="w-[229px]">
        <div className="flex flex-col gap-2.5 pt-[7px] pl-[7px] whitespace-nowrap">
          {["Item check boxes", "File name extensions", "Hidden items"].map((t) => (
            <label key={t} className="flex items-center gap-1.5">
              <input type="checkbox" defaultChecked className="peer sr-only" />
              <span className="flex h-3 w-3 items-center justify-center border border-[#444] bg-white">
                <Line d="M2 12 L9 20 L22 3" className="h-2.5 w-2.5" w={4.5} />
              </span>
              {t}
            </label>
          ))}
        </div>
        <button className="ml-auto flex w-[88px] flex-col items-center pt-[7px]">
          <svg viewBox="0 0 22 28" className="h-7 w-[22px]" fill="none" aria-hidden="true">
            <path d="M0.500 27.500 V0.500 H16 L21.500 6 V8" stroke="#a8adb1" />
            <path d="M16 0.500 V6 H21.500" stroke="#a8adb1" />
            <path d="M1 27 L21 6" stroke="#b9bdc0" />
            <path d="M21.500 9 V27.500 H2" stroke="#2e9ce6" strokeDasharray="3 2" />
          </svg>
          <span className="mt-[5px] leading-[13px]">Hide selected<br />items</span>
        </button>
      </Group>
      <div className="my-0.5 flex w-[57px] flex-col border-r border-[#e2e3e4]">
        <button className="flex flex-col items-center pt-[9px]">
          <svg viewBox="0 0 28 21" className="h-[21px] w-7" aria-hidden="true">
            <path d="M0.500 0.500 H27.500 V20.500 H0.500Z" fill="#fff" stroke="#8a8f94" />
            <path d="M1 1 H27 V3 H1Z" fill="#8a8f94" />
            <path d="M4 6 L6 8 L9 4 M4 11 L6 13 L9 9 M4 16 L6 18 L9 14" stroke="#2e8de0" fill="none" strokeWidth="1.500" />
            <path d="M12 7 H24 M12 12 H24 M12 17 H24" stroke="#c4c8cb" />
          </svg>
          <span className="mt-2.5 leading-[13px]">Options<br /><Caret /></span>
        </button>
      </div>
    </div>
  );
}

const CRUMBS = ["This PC", "Documents", "UiPath", "ConsultasVarias", "DataAndResult", "Resultado"];

function AddressRow() {
  return (
    <div className="flex h-[43px] items-center bg-white px-3 text-[11px]">
      <button aria-label="Back" className="text-[#555]"><Line d="M24 12 H2 M10 4 L2 12 L10 20" className="h-[13px] w-[13px]" w={2.8} /></button>
      <button aria-label="Forward" className="ml-[18px] text-[#c8c8c8]"><Line d="M0 12 H22 M14 4 L22 12 L14 20" className="h-[13px] w-[13px]" w={2.8} /></button>
      <button aria-label="Recent" className="ml-3 text-[#777]"><Line d={CHEVRON_DOWN} className="h-[7px] w-[7px]" w={4} /></button>
      <button aria-label="Up" className="ml-3 text-[#555]"><Line d="M12 24 V2 M4 10 L12 2 L20 10" className="h-[13px] w-[13px]" w={2.8} /></button>
      <div className="ml-[6px] flex h-[30px] flex-1 items-center border border-[#d9d9d9] pl-0.5">
        <Folder />
        {CRUMBS.map((c) => (
          <span key={c} className="flex items-center">
            <Line d={CHEVRON_RIGHT} className="mx-2 h-[7px] w-[7px] text-[#666]" w={4} />
            <a href="#">{c}</a>
          </span>
        ))}
        <button aria-label="Previous locations" className="mr-2.5 ml-auto text-[#555]"><Line d={CHEVRON_DOWN} className="h-[10px] w-[10px]" w={4} /></button>
        <button aria-label="Refresh" className="flex h-full w-[30px] items-center justify-center border-l border-[#d9d9d9] text-[#555]">
          <Line d="M18 5 A9 9 0 1 1 8 5 M8 0 V8 H1" className="h-[12px] w-[12px]" w={3} />
        </button>
      </div>
      <label className="ml-3 flex h-[30px] w-[148px] items-center border border-[#d9d9d9] pl-4 text-xs text-[#777]">
        <Line d="M22 9 A7 7 0 1 1 8 9 A7 7 0 0 1 22 9 M10 14 L2 22" className="h-[13px] w-[13px] shrink-0" w={1.8} />
        <input aria-label="Search Resultado" placeholder="Search Resultado" className="ml-2.5 w-full min-w-0 outline-none placeholder:text-[#6d6d6d]" />
      </label>
    </div>
  );
}

function FileTable() {
  const th = "h-[25px] border-r border-[#e5e5e5] flex items-center pl-[7px] text-[#44597a]";
  return (
    <div className="flex-1 pl-2">
      <table className="w-[686px] table-fixed border-collapse text-left">
        <colgroup>
          <col className="w-[299px]" />
          <col className="w-[162px]" />
          <col className="w-[135px]" />
          <col className="w-[90px]" />
        </colgroup>
        <thead>
          <tr>
            <th className="p-0 pb-1.5 font-normal">
              <div className="relative flex h-[25px] items-center gap-[10px] border-r border-[#e5e5e5] pl-[4px] text-[#44597a]">
                <input type="checkbox" aria-label="Select all" className="h-[13px] w-[13px] appearance-none border border-[#333] bg-white" />
                Name
                <Line d={CHEVRON_UP} className="absolute top-0 left-1/2 h-2 w-2 text-[#777]" w={3} />
              </div>
            </th>
            <th className="p-0 pb-1.5 font-normal"><div className={th}>Date modified</div></th>
            <th className="p-0 pb-1.5 font-normal"><div className={th}>Type</div></th>
            <th className="p-0 pb-1.5 font-normal"><div className={th}>Size</div></th>
          </tr>
        </thead>
        <tbody>
          <tr className="text-[#6d6d6d]">
            <td className="p-0">
              <div className="ml-[7px] flex h-[22px] items-center bg-[#d9d9d9] pl-1 text-black">
                <span className="flex h-[13px] w-[13px] items-center justify-center border border-[#333] bg-white">
                  <Line d="M2 12 L9 19 L22 4" className="h-[9px] w-[9px]" w={3.5} />
                </span>
                <svg viewBox="0 0 12 16" className="ml-1 h-4 w-3" aria-hidden="true">
                  <path d="M0.500 0.500 H8 L11.500 4 V15.500 H0.500Z" fill="#fff" stroke="#3fae2a" />
                  <path d="M8 0 H12 V5Z" fill="#3fae2a" />
                  <path d="M2.500 6.500 H9.500 V12.500 H2.500Z M2.500 9.500 H9.500 M6 6.500 V12.500" fill="none" stroke="#3fae2a" />
                </svg>
                <span className="ml-1.5">Consultas.xlsx</span>
              </div>
            </td>
            <td className="p-0"><div className="h-[22px] bg-[#d9d9d9] pl-[7px] leading-[22px]">10/09/2021 12:10 p. m.</div></td>
            <td className="p-0"><div className="h-[22px] bg-[#d9d9d9] pl-[7px] leading-[22px]">Microsoft Excel Work...</div></td>
            <td className="p-0"><div className="mr-[3px] h-[22px] bg-[#d9d9d9] pr-1 text-right leading-[22px]">9 KB</div></td>
          </tr>
        </tbody>
      </table>
    </div>
  );
}

function Explorer() {
  return (
    <div className="flex flex-1 flex-col bg-white font-['Open_Sans'] text-xs text-black">
      <div className="flex h-[23px] items-center pl-[1px] text-[#8f8f8f]">
        <Folder />
        <span className="mx-[7px] h-3 w-px bg-[#8f8f8f]" />
        <svg viewBox="0 0 12 14" className="ml-1 h-3.5 w-3" aria-hidden="true">
          <path d="M0.500 0.500 H8 L11.500 4 V13.500 H0.500Z" fill="#fff" stroke="#b0b0b0" />
          <path d="M3 7 L5 10 L9 5" stroke="#e0673a" strokeWidth="1.500" fill="none" />
        </svg>
        <span className="ml-2"><Folder /></span>
        <svg viewBox="0 0 8 6" className="ml-2 h-1.5 w-2" aria-hidden="true"><path d="M0 0 H8 V1 H0Z M1 3 H7 L4 6Z" fill="#111" /></svg>
        <span className="mx-[7px] h-3 w-px bg-[#8f8f8f]" />
        <span>Resultado</span>
        <div className="ml-auto flex items-center gap-9 pr-5">
          <button aria-label="Minimize"><Line d="M0 12 H24" className="h-[10px] w-[10px]" w={2.4} /></button>
          <button aria-label="Restore"><Line d={RESTORE} className="h-[10px] w-[10px]" w={2.4} /></button>
          <button aria-label="Close"><Line d={CROSS} className="h-[10px] w-[10px]" w={2.4} /></button>
        </div>
      </div>
      <div className="flex h-[23px] items-stretch text-[11px] text-[#333]">
        <button className="w-14 bg-[#0063b1] text-white">File</button>
        <button className="w-[58px]">Home</button>
        <button className="w-[59px]">Share</button>
        <button className="-mb-px w-[54px] border border-b-0 border-[#dadbdc] bg-[#f5f6f7]">View</button>
        <div className="ml-auto flex items-center gap-2.5 pr-[3px]">
          <Line d={CHEVRON_UP} className="h-2 w-2 text-[#888]" w={4} />
          <button aria-label="Help" className="h-4 w-4 rounded-full bg-[#0a63b8] text-[11px] leading-4 font-bold text-white">?</button>
        </div>
      </div>
      <Ribbon />
      <AddressRow />
      <div className="flex flex-1">
        <PlacesList />
        <FileTable />
      </div>
      <div className="flex h-[23px] items-center pr-2 pl-[14px] text-[#1e395b]">
        <span>1 item</span>
        <span className="mx-[10px] h-3.5 w-px bg-[#e5e5e5]" />
        <span>1 item selected&nbsp; 8,04 KB</span>
        <span className="mx-[10px] h-3.5 w-px bg-[#e5e5e5]" />
        <button aria-label="Details view" className="ml-auto flex h-[23px] w-[22px] items-center justify-center border border-[#26a0da] bg-[#cce8f6]">
          <svg viewBox="0 0 16 14" className="h-3.5 w-4" fill="none" stroke="#777" aria-hidden="true">
            <path d="M0.500 0.500 H4.500 V13.500 H0.500Z M0.500 4.500 H4.500 M0.500 9 H4.500 M6 2.500 H10 M11 2.500 H15 M6 7 H10 M11 7 H15 M6 11.500 H10 M11 11.500 H15" />
          </svg>
        </button>
        <button aria-label="Thumbnail view" className="ml-1"><Picture /></button>
      </div>
    </div>
  );
}

/* ------------------------------------------------------------------ */

export default function App() {
  return (
    <div className="flex h-screen w-full overflow-hidden bg-black">
      <div className="flex min-w-0 flex-[6] flex-col">
        <TabStrip />
        <Toolbar />
        <div className="flex min-h-0 flex-1">
          <SitePage />
          <Scrollbar />
        </div>
        <div className="mb-[9px] flex h-[60px] justify-between bg-[#1a2a2c]">
          <TaskButtons />
          <Tray />
        </div>
      </div>
      <div className="flex min-w-0 flex-[5] flex-col pt-[189px]">
        <Explorer />
        <div className="flex h-10 justify-between bg-[#1a2a2c]">
          <TaskButtons small />
          <div className="pt-[2px] pr-[7px] text-right font-['Open_Sans'] text-xs leading-[18px] text-white">
            <div>12:11 p. m.</div>
            <div>10/09/2021</div>
          </div>
        </div>
      </div>
    </div>
  );
}
